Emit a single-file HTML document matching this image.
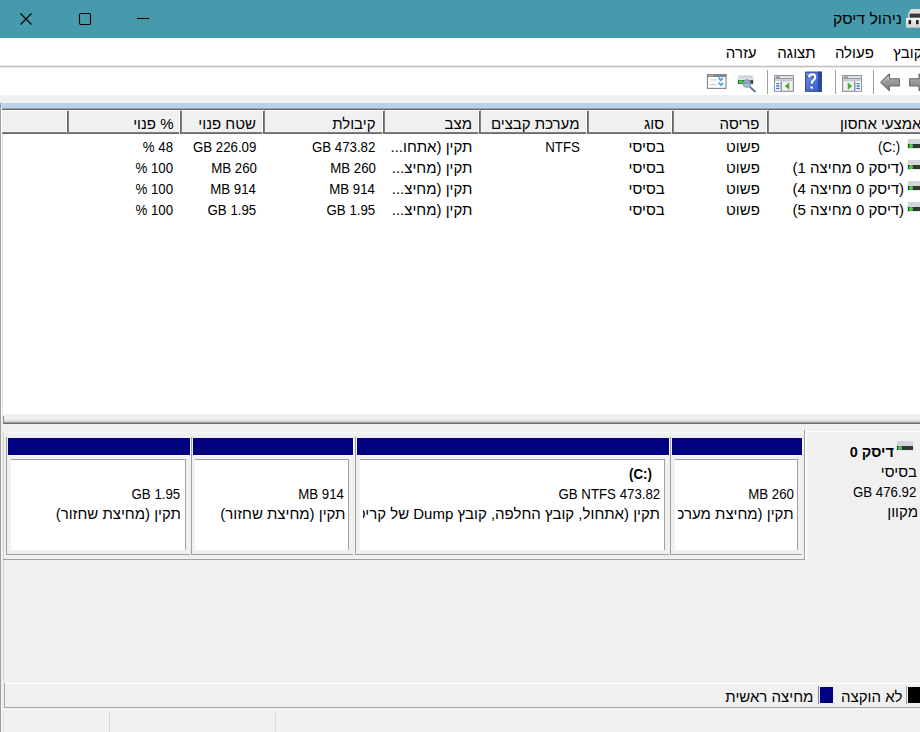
<!DOCTYPE html>
<html lang="he">
<head>
<meta charset="utf-8">
<style>
html,body{margin:0;padding:0;}
body{width:920px;height:732px;overflow:hidden;position:relative;background:#f0f0f0;font-family:"Liberation Sans",sans-serif;font-size:13px;color:#000;}
.a{position:absolute;}
.t{position:absolute;white-space:nowrap;direction:rtl;line-height:20px;height:20px;text-align:right;color:#000;}
.h{font-size:15px;}
.mh{font-size:15px;}
.ti{font-size:15.8px;}
.l{font-size:14.5px;transform:scaleX(0.915);transform-origin:100% 50%;}
.lb{font-size:14.5px;font-weight:bold;transform:scaleX(0.915);transform-origin:100% 50%;}
.hb{font-size:14.5px;font-weight:bold;}
.hc{position:absolute;top:110px;height:21px;background:#f0f0f0;border-top:1px solid #fff;border-right:1px solid #fff;border-bottom:1px solid #808080;border-left:1px solid #808080;box-shadow:-1px 1px 0 #696969;}
.pt{position:absolute;top:437px;height:117px;border-left:1px solid #a0a0a0;border-bottom:1px solid #a0a0a0;}
.nv{position:absolute;left:1px;right:0;top:1px;height:17px;background:#000080;box-shadow:1px 1px 0 #fbfbfb;}
.bx{position:absolute;top:22px;bottom:4px;background:#fff;border-top:1px solid #a0a0a0;border-right:1px solid #a0a0a0;}
</style>
</head>
<body>
<!-- title bar -->
<div class="a" style="left:0;top:0;width:920px;height:38px;background:#479aab;"></div>
<svg class="a" style="left:0;top:0" width="170" height="38">
 <path d="M20.5 13.5 L31.5 24.5 M31.5 13.5 L20.5 24.5" stroke="#000" stroke-width="1.1" fill="none"/>
 <rect x="79.5" y="13.5" width="11" height="11" rx="1.5" stroke="#000" stroke-width="1.1" fill="none"/>
 <path d="M137 18.5 H149" stroke="#000" stroke-width="1.1"/>
</svg>
<svg class="a" style="left:905px;top:8px" width="16" height="21">
 <defs><linearGradient id="tg" x1="0" x2="0" y1="0" y2="1"><stop offset="0" stop-color="#fafafa"/><stop offset="1" stop-color="#cdcdcd"/></linearGradient></defs>
 <path d="M3 5.8 L6 1 H16 V9.8 H3 Z" fill="#dedede"/>
 <rect x="4.6" y="5.6" width="11.4" height="4.2" fill="#383838"/>
 <rect x="1" y="9.8" width="15" height="10" fill="url(#tg)"/>
 <rect x="3.5" y="12" width="2.6" height="4.2" rx="0.8" fill="#1e1e1e"/>
 <rect x="11" y="12" width="2.6" height="4.2" rx="0.8" fill="#1e1e1e"/>
</svg>
<!-- menu -->
<div class="a" style="left:0;top:38px;width:920px;height:28px;background:#fff;"></div>

<!-- toolbar -->
<div class="a" style="left:0;top:67px;width:920px;height:28px;background:#fff;"></div>
<div class="a" style="left:0;top:65px;width:920px;height:1px;background:#ebebeb;"></div><div class="a" style="left:0;top:66px;width:920px;height:1px;background:#c2c2c2;"></div><div class="a" style="left:0;top:67px;width:920px;height:1px;background:#ebebeb;"></div>
<div class="a" style="left:767px;top:70px;width:1px;height:24px;background:#a0a0a0;"></div>
<div class="a" style="left:835px;top:70px;width:1px;height:24px;background:#a0a0a0;"></div>
<div class="a" style="left:873px;top:70px;width:1px;height:24px;background:#a0a0a0;"></div>
<svg class="a" style="left:700px;top:68px" width="220" height="27">
 <defs>
  <linearGradient id="hg" x1="0" x2="1" y1="0" y2="1"><stop offset="0" stop-color="#6d8ff0"/><stop offset="1" stop-color="#3556c0"/></linearGradient>
  <linearGradient id="ag" x1="0" x2="0" y1="0" y2="1"><stop offset="0" stop-color="#b4b4b4"/><stop offset="1" stop-color="#7c7c7c"/></linearGradient>
 </defs>
 <!-- icon1 -->
 <rect x="7.5" y="6.7" width="18.5" height="13.7" fill="#fff" stroke="#858a90" stroke-width="1.2"/>
 <rect x="7" y="6.2" width="19.5" height="2.8" fill="#80868c"/>
 <rect x="9.3" y="7" width="1.4" height="1.3" fill="#c8cbd0"/><rect x="11.3" y="7" width="1.4" height="1.3" fill="#c8cbd0"/>
 <path d="M10 11.8 H16.5 M10 16.7 H16.5" stroke="#cfcfcf" stroke-width="1.2"/>
 <path d="M18.6 9.6 L20.8 12.4 L23 10 M18.6 14.5 L20.8 17.3 L23 14.9" stroke="#4aa0ee" stroke-width="1.8" fill="none" stroke-linejoin="round"/>
 <!-- icon2 -->
 <rect x="36.8" y="9.9" width="17.2" height="6.9" fill="#e3e5e9"/>
 <rect x="38.3" y="7.2" width="14.6" height="3.4" fill="#d4d7dc"/>
 <rect x="38" y="12.2" width="15" height="3.6" fill="#333"/>
 <rect x="38.6" y="12.4" width="4.4" height="3.2" rx="1.2" fill="#34d834"/>
 <path d="M50 19 L55 23.5" stroke="#5a7a90" stroke-width="1.8" stroke-linecap="round"/>
 <circle cx="46.9" cy="15.5" r="3.9" fill="#9bbad3" fill-opacity="0.9" stroke="#7894aa" stroke-width="0.9"/>
 <path d="M43.6 15 H50.2" stroke="#5f7d96" stroke-width="1" opacity="0.6"/>
 <!-- icon3 -->
 <rect x="74.6" y="7.6" width="18.8" height="15.7" fill="#f3f3f3" stroke="#8e949c" stroke-width="1.2"/>
 <rect x="75.2" y="8.2" width="17.6" height="2" fill="#e1e4e9"/>
 <rect x="76.2" y="8.5" width="1.4" height="1.4" fill="#606870"/><rect x="78.2" y="8.5" width="1.4" height="1.4" fill="#606870"/>
 <rect x="75.2" y="10.2" width="17.6" height="1" fill="#7d8590"/>
 <rect x="75.2" y="11.2" width="17.6" height="2.3" fill="#c6cbd3"/>
 <rect x="75.2" y="13.5" width="5.3" height="9.2" fill="#fff"/>
 <rect x="80.5" y="13.5" width="1.5" height="9.2" fill="#8e949c"/>
 <path d="M76.6 15.6 H79 M76.6 18 H79 M76.6 20.5 H79" stroke="#3b7bd0" stroke-width="1.3" stroke-linecap="round"/>
 <path d="M89 14.9 L85.1 18.1 L89 21.3 Z" fill="#46b032" stroke="#46b032" stroke-width="0.6" stroke-linejoin="round"/>
 <!-- icon4 help -->
 <rect x="105.1" y="3.7" width="16.7" height="20" fill="url(#hg)"/>
 <rect x="118" y="3.7" width="3.8" height="20" fill="#2b47a6"/>
 <rect x="105.6" y="4.2" width="15.7" height="19" fill="none" stroke="#2c44a0" stroke-width="1"/>
 <path d="M108.9 9.4 Q109.3 6.3 112.3 6.3 Q115.3 6.4 115.1 9.3 Q114.9 11.4 112.7 12.8 Q111.5 13.7 111.5 15.8" stroke="#1a2870" stroke-width="2.2" fill="none" opacity="0.6" transform="translate(-1,0.7)"/>
 <path d="M108.9 9.4 Q109.3 6.3 112.3 6.3 Q115.3 6.4 115.1 9.3 Q114.9 11.4 112.7 12.8 Q111.5 13.7 111.5 15.8" stroke="#fff" stroke-width="2.2" fill="none"/>
 <rect x="109.2" y="18.9" width="2.6" height="2" fill="#1a2870" opacity="0.5"/><rect x="110.2" y="18.6" width="2.7" height="2" fill="#fff"/>
 <!-- icon5 -->
 <rect x="142.6" y="7.6" width="18.8" height="15.7" fill="#f3f3f3" stroke="#8e949c" stroke-width="1.2"/>
 <rect x="143.2" y="8.2" width="17.6" height="2" fill="#e1e4e9"/>
 <rect x="144.2" y="8.5" width="1.4" height="1.4" fill="#606870"/><rect x="146.2" y="8.5" width="1.4" height="1.4" fill="#606870"/>
 <rect x="143.2" y="10.2" width="17.6" height="1" fill="#7d8590"/>
 <rect x="143.2" y="11.2" width="17.6" height="2.3" fill="#c6cbd3"/>
 <rect x="155.5" y="13.5" width="5.3" height="9.2" fill="#fff"/>
 <rect x="154" y="13.5" width="1.5" height="9.2" fill="#8e949c"/>
 <path d="M157 15.6 H159.4 M157 18 H159.4 M157 20.5 H159.4" stroke="#3b7bd0" stroke-width="1.3" stroke-linecap="round"/>
 <path d="M148 14.9 L151.9 18.1 L148 21.3 Z" fill="#46b032" stroke="#46b032" stroke-width="0.6" stroke-linejoin="round"/>
 <!-- back arrow -->
 <path d="M180.8 14.3 L189.4 6 V10.8 H199.4 V18 H189.4 V22.6 Z" fill="url(#ag)" stroke="#6a6a6a" stroke-width="1.1" stroke-linejoin="round"/>
 <path d="M182.8 14.3 L188.3 9 V12" stroke="#d6d6d6" stroke-width="0.8" fill="none"/>
 <!-- forward arrow (clipped) -->
 <path d="M209.6 10.8 H219 V6 L228 14.3 L219 22.6 V18 H209.6 Z" fill="url(#ag)" stroke="#6a6a6a" stroke-width="1.1" stroke-linejoin="round"/>
</svg>
<!-- blue strip -->
<div class="a" style="left:0;top:103px;width:920px;height:5px;background:#b9d1ea;"></div>
<!-- list area -->
<div class="a" style="left:0;top:108px;width:920px;height:306px;background:#fff;"></div>
<div class="a" style="left:2px;top:108px;width:918px;height:1px;background:#a0a0a0;"></div><div class="a" style="left:2px;top:109px;width:918px;height:1px;background:#696969;"></div>
<div class="a" style="left:0;top:103px;width:1px;height:629px;background:#a0a0a0;"></div>
<div class="a" style="left:2px;top:110px;width:1px;height:304px;background:#e3e3e3;"></div>
<div class="hc" style="left:2px;width:63px;border-left:1px solid #f0f0f0;box-shadow:0 1px 0 #696969;"></div>
<div class="hc" style="left:68px;width:110px;"></div>
<div class="hc" style="left:181px;width:80px;"></div>
<div class="hc" style="left:264px;width:117px;"></div>
<div class="hc" style="left:384px;width:93px;"></div>
<div class="hc" style="left:480px;width:105px;"></div>
<div class="hc" style="left:588px;width:82px;"></div>
<div class="hc" style="left:673px;width:92px;"></div>
<div class="hc" style="left:768px;width:160px;"></div>
<svg class="a" style="left:907px;top:139px" width="18" height="11"><rect x="0" y="3" width="18" height="7" fill="#e6e8ec"/><rect x="1" y="0" width="16" height="5" fill="#d2d5da"/><rect x="1" y="5" width="16" height="4" fill="#353535"/><rect x="2" y="5" width="4" height="4" fill="#3cd43c" rx="1.5"/></svg>
<svg class="a" style="left:907px;top:160px" width="18" height="11"><rect x="0" y="3" width="18" height="7" fill="#e6e8ec"/><rect x="1" y="0" width="16" height="5" fill="#d2d5da"/><rect x="1" y="5" width="16" height="4" fill="#353535"/><rect x="2" y="5" width="4" height="4" fill="#3cd43c" rx="1.5"/></svg>
<svg class="a" style="left:907px;top:181px" width="18" height="11"><rect x="0" y="3" width="18" height="7" fill="#e6e8ec"/><rect x="1" y="0" width="16" height="5" fill="#d2d5da"/><rect x="1" y="5" width="16" height="4" fill="#353535"/><rect x="2" y="5" width="4" height="4" fill="#3cd43c" rx="1.5"/></svg>
<svg class="a" style="left:907px;top:202px" width="18" height="11"><rect x="0" y="3" width="18" height="7" fill="#e6e8ec"/><rect x="1" y="0" width="16" height="5" fill="#d2d5da"/><rect x="1" y="5" width="16" height="4" fill="#353535"/><rect x="2" y="5" width="4" height="4" fill="#3cd43c" rx="1.5"/></svg>
<!-- splitter -->
<div class="a" style="left:3px;top:414px;width:917px;height:4px;background:#f0f0f0;"></div>
<div class="a" style="left:3px;top:418px;width:917px;height:1px;background:#f6f6f6;"></div>
<div class="a" style="left:3px;top:419px;width:917px;height:2px;background:#e6e6e6;"></div><div class="a" style="left:3px;top:421px;width:917px;height:1px;background:#cfcfcf;"></div>
<div class="a" style="left:3px;top:422px;width:917px;height:1px;background:#a0a0a0;"></div><div class="a" style="left:3px;top:423px;width:917px;height:1px;background:#696969;"></div>
<div class="a" style="left:3px;top:416px;width:1px;height:8px;background:#8a8a8a;"></div>
<!-- lower pane -->
<div class="a" style="left:3px;top:432px;width:917px;height:1px;background:#f8f8f8;"></div>
<div class="a" style="left:3px;top:432px;width:1px;height:250px;background:#d4d4d4;"></div>
<div class="pt" style="left:6px;width:183px;"><div class="nv"></div><div class="bx" style="left:4px;right:4px;"></div></div>
<div class="pt" style="left:191px;width:161px;"><div class="nv"></div><div class="bx" style="left:3px;right:4px;"></div></div>
<div class="pt" style="left:355px;width:313px;"><div class="nv"></div><div class="bx" style="left:4px;right:4px;"></div></div>
<div class="pt" style="left:670px;width:131px;"><div class="nv"></div><div class="bx" style="left:4px;right:4px;"></div></div>
<div class="a" style="left:3px;top:559px;width:801px;height:1px;background:#a0a0a0;"></div>
<!-- disk info box -->
<div class="a" style="left:804px;top:430px;width:116px;height:130px;background:#f0f0f0;border-left:1px solid #a0a0a0;"></div>
<div class="a" style="left:805px;top:431px;width:115px;height:1px;background:#fff;"></div>
<div class="a" style="left:805px;top:431px;width:2px;height:128px;background:#fff;"></div>
<svg class="a" style="left:896px;top:441px" width="18" height="11"><rect x="0" y="3" width="18" height="7" fill="#e6e8ec"/><rect x="1" y="0" width="16" height="5" fill="#d2d5da"/><rect x="1" y="5" width="16" height="4" fill="#353535"/><rect x="2" y="5" width="4" height="4" fill="#3cd43c" rx="1.5"/></svg>
<!-- legend -->
<div class="a" style="left:4px;top:683px;width:916px;height:1px;background:#fff;"></div>
<div class="a" style="left:4px;top:683px;width:1px;height:25px;background:#a8a8a8;"></div>
<div class="a" style="left:4px;top:707px;width:916px;height:1px;background:#a8a8a8;"></div>
<div class="a" style="left:1px;top:709px;width:919px;height:1px;background:#fbfbfb;"></div><div class="a" style="left:3px;top:712px;width:1px;height:20px;background:#e0e0e0;"></div>
<div class="a" style="left:906px;top:686px;width:1px;height:18px;background:#a0a0a0;"></div>
<div class="a" style="left:908px;top:687px;width:12px;height:16px;background:#000;"></div>
<div class="a" style="left:818px;top:686px;width:1px;height:18px;background:#8080b0;"></div>
<div class="a" style="left:820px;top:687px;width:13px;height:16px;background:#000080;"></div>
<!-- status bar -->
<div class="a" style="left:109px;top:712px;width:1px;height:20px;background:#d9d9d9;"></div>
<div class="a" style="left:275px;top:712px;width:1px;height:20px;background:#d9d9d9;"></div>
<div id="t0" class="t ti" style="right:18.10px;top:9.00px;">ניהול דיסק</div>
<div id="t1" class="t mh" style="right:-2.50px;top:43.00px;">קובץ</div>
<div id="t2" class="t mh" style="right:46.20px;top:43.00px;">פעולה</div>
<div id="t3" class="t mh" style="right:104.40px;top:43.00px;">תצוגה</div>
<div id="t4" class="t mh" style="right:163.50px;top:43.00px;">עזרה</div>
<div id="t5" class="t h" style="right:746.50px;top:114.00px;">% פנוי</div>
<div id="t6" class="t h" style="right:664.10px;top:114.00px;">שטח פנוי</div>
<div id="t7" class="t h" style="right:544.50px;top:114.00px;">קיבולת</div>
<div id="t8" class="t h" style="right:448.00px;top:114.00px;">מצב</div>
<div id="t9" class="t h" style="right:340.50px;top:114.00px;">מערכת קבצים</div>
<div id="t10" class="t h" style="right:255.90px;top:114.00px;">סוג</div>
<div id="t11" class="t h" style="right:160.50px;top:114.00px;">פריסה</div>
<div id="t12" class="t h" style="right:-1.50px;top:114.00px;">אמצעי אחסון</div>
<div id="t13" class="t l" style="right:20.10px;top:137.00px;direction:ltr;">(C:)</div>
<div id="t14" class="t h" style="right:160.20px;top:137.00px;">פשוט</div>
<div id="t15" class="t h" style="right:255.30px;top:137.00px;">בסיסי</div>
<div id="t16" class="t l" style="right:340.50px;top:137.00px;">NTFS</div>
<div id="t17" class="t h" style="right:447.60px;top:137.00px;">תקין (אתחו...</div>
<div id="t18" class="t l" style="right:545.00px;top:137.00px;">GB 473.82</div>
<div id="t19" class="t l" style="right:663.40px;top:137.00px;">GB 226.09</div>
<div id="t20" class="t l" style="right:747.00px;top:137.00px;">48 %</div>
<div id="t21" class="t h" style="right:15.90px;top:158.00px;">(דיסק 0 מחיצה 1)</div>
<div id="t22" class="t h" style="right:160.20px;top:158.00px;">פשוט</div>
<div id="t23" class="t h" style="right:255.30px;top:158.00px;">בסיסי</div>
<div id="t24" class="t h" style="right:447.60px;top:158.00px;">תקין (מחיצ...</div>
<div id="t25" class="t l" style="right:544.00px;top:158.00px;">MB 260</div>
<div id="t26" class="t l" style="right:663.40px;top:158.00px;">MB 260</div>
<div id="t27" class="t l" style="right:747.00px;top:158.00px;">100 %</div>
<div id="t28" class="t h" style="right:15.90px;top:179.00px;">(דיסק 0 מחיצה 4)</div>
<div id="t29" class="t h" style="right:160.20px;top:179.00px;">פשוט</div>
<div id="t30" class="t h" style="right:255.30px;top:179.00px;">בסיסי</div>
<div id="t31" class="t h" style="right:447.60px;top:179.00px;">תקין (מחיצ...</div>
<div id="t32" class="t l" style="right:545.00px;top:179.00px;">MB 914</div>
<div id="t33" class="t l" style="right:664.40px;top:179.00px;">MB 914</div>
<div id="t34" class="t l" style="right:747.00px;top:179.00px;">100 %</div>
<div id="t35" class="t h" style="right:15.90px;top:200.00px;">(דיסק 0 מחיצה 5)</div>
<div id="t36" class="t h" style="right:160.20px;top:200.00px;">פשוט</div>
<div id="t37" class="t h" style="right:255.30px;top:200.00px;">בסיסי</div>
<div id="t38" class="t h" style="right:447.60px;top:200.00px;">תקין (מחיצ...</div>
<div id="t39" class="t l" style="right:545.00px;top:200.00px;">GB 1.95</div>
<div id="t40" class="t l" style="right:663.40px;top:200.00px;">GB 1.95</div>
<div id="t41" class="t l" style="right:747.00px;top:200.00px;">100 %</div>
<div id="t42" class="t l" style="right:740.10px;top:484.00px;">GB 1.95</div>
<div id="t43" class="t h" style="right:739.10px;top:504.00px;">תקין (מחיצת שחזור)</div>
<div id="t44" class="t l" style="right:576.50px;top:484.00px;">MB 914</div>
<div id="t45" class="t h" style="right:574.50px;top:504.00px;">תקין (מחיצת שחזור)</div>
<div id="t46" class="t lb" style="right:267.70px;top:464.00px;direction:ltr;">(C:)</div>
<div id="t47" class="t l" style="right:260.10px;top:484.00px;">GB NTFS 473.82</div>
<div class="a" style="left:363px;top:0;width:301px;height:732px;overflow:hidden;"><div id="t48" class="t h" style="right:4.10px;top:504.00px;">תקין (אתחול, קובץ החלפה, קובץ Dump של קריסה, מחיצה ראשית)</div></div>
<div id="t49" class="t l" style="right:126.50px;top:484.00px;">MB 260</div>
<div class="a" style="left:678px;top:0;width:120px;height:732px;overflow:hidden;"><div id="t50" class="t h" style="right:4.50px;top:504.00px;">תקין (מחיצת מערכת EFI)</div></div>
<div id="t51" class="t hb" style="right:26.10px;top:442.00px;">דיסק 0</div>
<div id="t52" class="t h" style="right:3.00px;top:462.00px;">בסיסי</div>
<div id="t53" class="t l" style="right:4.00px;top:482.00px;">GB 476.92</div>
<div id="t54" class="t h" style="right:2.00px;top:502.00px;">מקוון</div>
<div id="t55" class="t h" style="right:17.50px;top:687.00px;">לא הוקצה</div>
<div id="t56" class="t h" style="right:106.70px;top:687.00px;">מחיצה ראשית</div>
</body>
</html>
